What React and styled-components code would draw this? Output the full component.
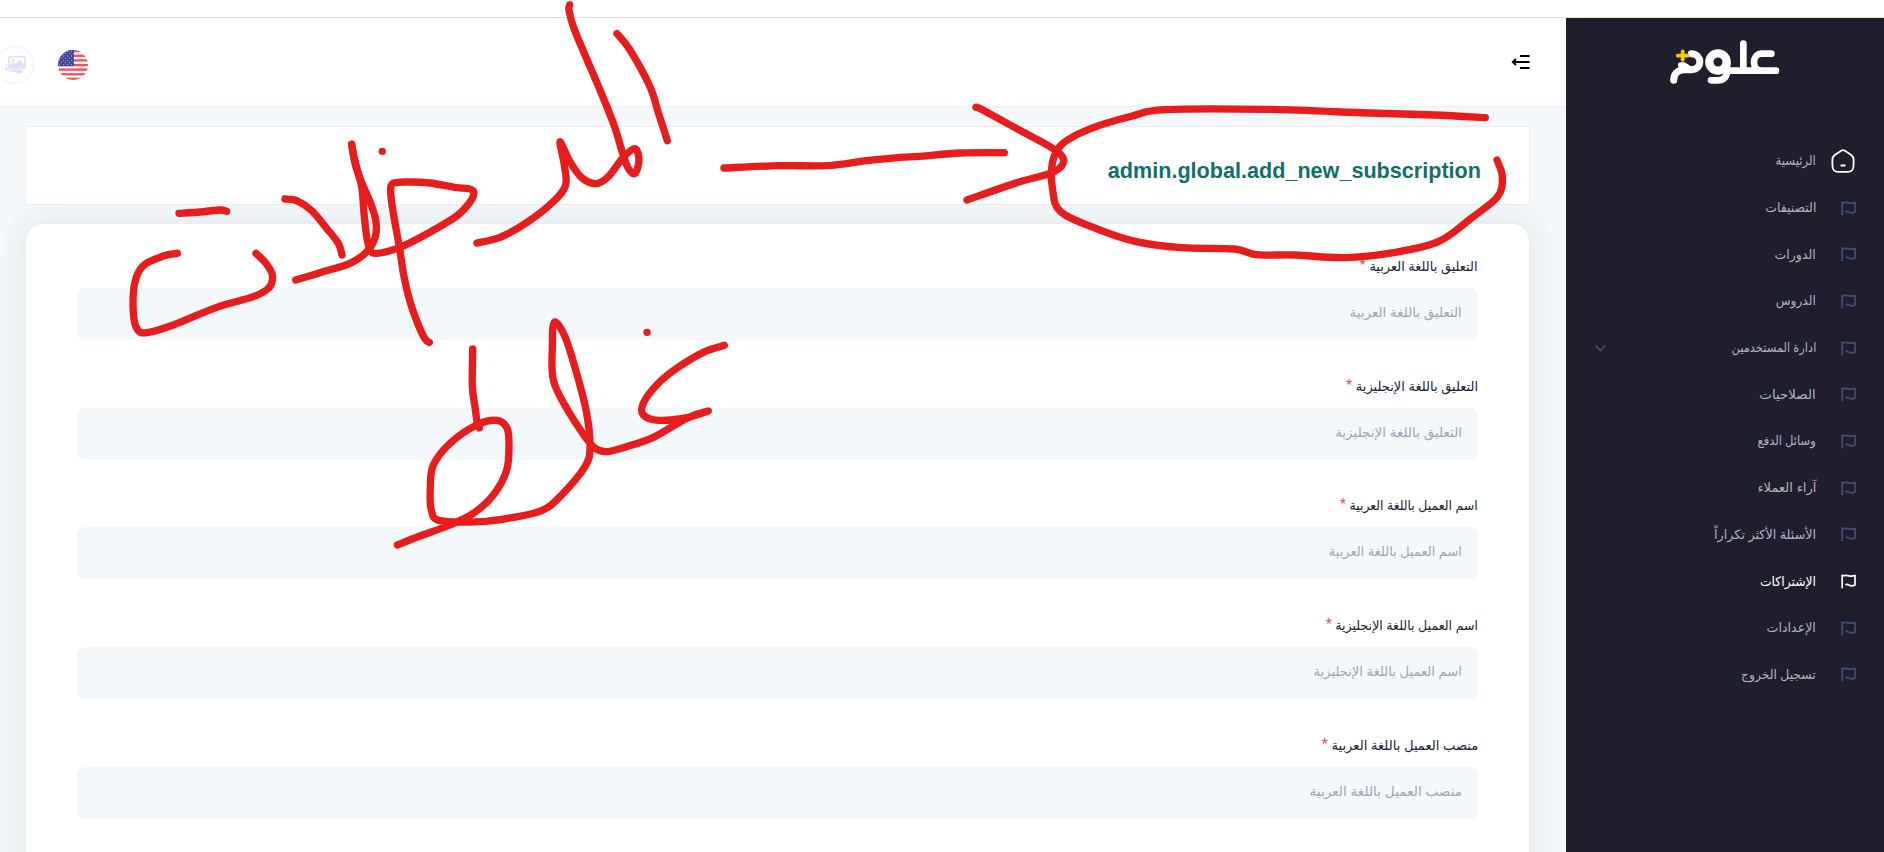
import React from 'react';
import styled, { createGlobalStyle } from 'styled-components';

const Global = createGlobalStyle`
  *, *::before, *::after { box-sizing: border-box; }
  body { margin: 0; background: #fff; overflow: hidden; font-family: "Liberation Sans", "DejaVu Sans", sans-serif; }
`;

const Page = styled.div`
  position: relative;
  width: 100%;
  height: 852px;
  padding-top: 17px;
  overflow: hidden;
`;

const Shell = styled.div`
  display: flex;
  height: 835px;
  border-top: 1px solid #dedede;
`;

const Sidebar = styled.aside`
  flex: 0 0 318px;
  background: #1e1e2d;
`;

const Brand = styled.div`
  display: flex;
  justify-content: center;
  padding: 14px 0 0 0;
  height: 120px;
`;

const Menu = styled.nav`
  display: flex;
  flex-direction: column;
`;

const MenuItem = styled.a`
  display: flex;
  align-items: center;
  height: 46.7px;
  padding: 0 28px 0 29px;
  color: ${p => (p.$active ? '#ffffff' : '#b0b0c4')};
`;

const MenuIcon = styled.span`
  display: flex;
  width: 40px;
  flex: none;
  justify-content: flex-start;
  padding-right: ${p => (p.$home ? '1px' : '0')};
  color: ${p => (p.$active ? '#ffffff' : '#494b74')};
`;

const MenuText = styled.span`
  flex: 1;
  font-size: 13px;
  line-height: 20px;
`;

const Fit = styled.span`
  display: inline-block;
  white-space: nowrap;
  transform: scaleX(${p => p.$x});
  transform-origin: right center;
`;

const Main = styled.main`
  flex: 1;
  min-width: 0;
  display: flex;
  flex-direction: column;
  background: #f4f8fb;
`;

const Header = styled.header`
  display: flex;
  flex: none;
  align-items: center;
  height: 89px;
  padding: 5px 36px 0 0;
  background: #fff;
  border-bottom: 1px solid #eceef0;
`;

const HeaderEnd = styled.div`
  display: flex;
  align-items: center;
  gap: 24px;
  margin-right: auto;
  margin-left: -4px;
`;

const Toggle = styled.span`
  display: flex;
  margin-top: -6px;
`;

const Avatar = styled.span`
  display: flex;
  align-items: center;
  justify-content: center;
  width: 38px;
  height: 38px;
  border: 1px solid #f0f1f3;
  border-radius: 50%;
`;

const Content = styled.div`
  display: flex;
  flex-direction: column;
  gap: 18px;
  padding: 19px 36px 0 25px;
`;

const TitleCard = styled.section`
  display: flex;
  align-items: center;
  height: 79px;
  padding: 10px 48px 0 0;
  background: #fff;
  border: 1px solid #ebedef;
`;

const Title = styled.h1`
  margin: 0;
  color: #11706c;
  font-size: 21.6px;
  line-height: 26px;
  font-weight: 700;
`;

const FormCard = styled.section`
  display: flex;
  flex-direction: column;
  height: 700px;
  padding: 30px 51px 0;
  background: #fff;
  border: 1px solid #eaecee;
  border-radius: 18px;
  box-shadow: 0 0 30px rgba(40, 50, 60, 0.09);
`;

const Field = styled.div`
  height: 119.65px;
  flex: none;
`;

const Label = styled.label`
  display: block;
  height: 34px;
  color: #181c32;
  font-size: 13px;
  line-height: 26px;
`;

const Required = styled.span`
  color: #f1416c;
  font-size: 16px;
  line-height: 20px;
`;

const InputBox = styled.div`
  display: flex;
  align-items: center;
  height: 52px;
  padding: 0 16px 4px;
  background: #f4f8fb;
  border-radius: 8px;
  color: #a1a5b7;
  font-size: 13.5px;
`;

const Ink = styled.svg`
  position: absolute;
  top: 0;
  left: 0;
  pointer-events: none;
`;

const menu = [
  { text: 'الرئيسية', fit: 0.9, home: true },
  { text: 'التصنيفات', fit: 0.96 },
  { text: 'الدورات', fit: 0.965 },
  { text: 'الدروس', fit: 0.935 },
  { text: 'ادارة المستخدمين', fit: 0.88, expandable: true },
  { text: 'الصلاحيات', fit: 1.03 },
  { text: 'وسائل الدفع', fit: 0.885 },
  { text: 'آراء العملاء', fit: 1.01 },
  { text: 'الأسئلة الأكثر تكراراً', fit: 0.98 },
  { text: 'الإشتراكات', fit: 0.95, active: true },
  { text: 'الإعدادات', fit: 0.97 },
  { text: 'تسجيل الخروج', fit: 0.95 },
];

const fields = [
  { text: 'التعليق باللغة العربية', fit: 0.995 },
  { text: 'التعليق باللغة الإنجليزية', fit: 1 },
  { text: 'اسم العميل باللغة العربية', fit: 0.958 },
  { text: 'اسم العميل باللغة الإنجليزية', fit: 0.97 },
  { text: 'منصب العميل باللغة العربية', fit: 1.01 },
];

/* Pen strokes, three units to a pixel. */
const strokes = [
  [[537,640],[600,636],[660,630],[680,634]],
  [[532,760],[490,768],[430,797],[404,850],[400,940],[412,988],[440,998],[520,975],[650,922],[760,890],[808,862],[817,825],[798,790],[768,760]],
  [[855,597],[890,602],[935,632],[980,685],[1015,730],[1026,765]],
  [[887,840],[960,818],[1050,790],[1100,755],[1126,710],[1127,660],[1110,605],[1080,535],[1063,475],[1055,433]],
  [[1055,433],[1065,490],[1085,560],[1092,640],[1100,710],[1110,748],[1130,760],[1200,742],[1280,702],[1370,648],[1413,602],[1421,575],[1405,566],[1365,562],[1290,549],[1225,546],[1180,550],[1172,575],[1180,640],[1198,740],[1212,830],[1230,905],[1255,975],[1276,1018],[1288,1027]],
  [[1431,729],[1500,712],[1580,668],[1660,605],[1697,555],[1692,490],[1680,425],[1710,485],[1745,533],[1788,551],[1825,530],[1870,472],[1905,446],[1917,480],[1905,520],[1885,505],[1868,460],[1842,375],[1800,270],[1755,165],[1720,80],[1707,30],[1709,15]],
  [[1851,101],[1890,150],[1950,260],[1975,338],[2002,422]],
  [[2172,504],[2340,497],[2480,497],[2600,482],[2700,472],[2760,469],[2882,459],[3013,458]],
  [[2928,322],[2944,328],[3054,388],[3158,445],[3191,482],[3158,517],[3054,547],[2901,600]],
  [[4456,353],[4303,345],[4107,339],[3801,328],[3495,329],[3397,348],[3274,385],[3189,430],[3158,485],[3158,570],[3182,635],[3287,685],[3409,725],[3544,743],[3703,747],[3770,764],[3887,765],[4033,773],[4180,758],[4315,725],[4413,655],[4493,590],[4507,530],[4491,480]],
  [[1418,1047],[1417,1160],[1425,1220],[1432,1270],[1438,1284]],
  [[1192,1635],[1260,1608],[1350,1575],[1420,1540],[1480,1485],[1520,1410],[1527,1330],[1520,1282],[1490,1261],[1430,1275],[1350,1330],[1300,1395],[1291,1460],[1294,1530],[1320,1562],[1440,1565],[1540,1552],[1625,1532],[1680,1490],[1755,1400],[1770,1340],[1760,1240],[1730,1120],[1695,1010],[1663,967],[1657,1040],[1660,1140],[1700,1225],[1755,1310],[1785,1345],[1820,1355],[1880,1340],[1960,1312],[2060,1255],[2125,1233],[2060,1253],[1975,1261],[1930,1245],[1930,1210],[1970,1155],[2030,1105],[2110,1057],[2173,1036]],
];
const dots = [[1147, 454], [1941, 997]];

function smooth(pts) {
  let d = `M${pts[0]}`;
  for (let i = 0; i < pts.length - 1; i++) {
    const a = pts[i - 1] || pts[i];
    const b = pts[i];
    const c = pts[i + 1];
    const e = pts[i + 2] || c;
    d += `C${b[0] + (c[0] - a[0]) / 6} ${b[1] + (c[1] - a[1]) / 6} ${c[0] - (e[0] - b[0]) / 6} ${c[1] - (e[1] - b[1]) / 6} ${c[0]} ${c[1]}`;
  }
  return d;
}

const Annotation = () => (
  <Ink width="1884" height="852" viewBox="0 0 5652 2556" fill="none" stroke="#e71c1c" strokeWidth="22" strokeLinecap="round" strokeLinejoin="round">
    {strokes.map((s, i) => <path key={i} d={smooth(s)} />)}
    {dots.map(([x, y]) => <circle key={x} cx={x} cy={y} r="11" fill="#e71c1c" stroke="none" />)}
  </Ink>
);

const Logo = () => (
  <svg width="130" height="60" viewBox="0 0 390 180" fill="none" stroke="#fff" strokeWidth="20" strokeLinecap="round" strokeLinejoin="round">
    <path d="M334 65H306C274 65 274 116 306 116M348 116H205M250 35V112" />
    <ellipse cx="174" cy="90" rx="26" ry="26" strokeWidth="25" />
    <path d="M201 92V116C201 136 190 145 172 145H153" />
    <path d="M94 65C128 66 128 113 95 113H72C50 114 41 128 41 145" strokeWidth="21" />
    <path d="M62 99H72L86 108" strokeWidth="16" />
    <path d="M53 71H83M68 58V84" stroke="#f9c900" strokeWidth="11" />
  </svg>
);

const Home = () => (
  <svg width="24" height="24" viewBox="0 0 24 24" fill="none" stroke="#fff" strokeWidth="1.8" strokeLinecap="round" strokeLinejoin="round">
    <path d="M10.6 1.5Q12 .7 13.4 1.5L20.3 6Q22.5 7.7 22.6 10.5V15.5C22.6 21 21 22.9 16.5 22.9H7.5C3 22.9 1.4 21 1.4 15.5V10.5Q1.5 7.7 3.7 6Z" />
    <path d="M10.4 16.6H13.8" strokeWidth="2" />
  </svg>
);

const Flag = () => (
  <svg width="15" height="15" viewBox="0 0 15 15" fill="none" stroke="currentColor" strokeWidth="1.7">
    <path d="M1.2 .5V14.3M1.2 2.2C4 1 6 1.3 8 1.9C10 2.4 12 2.1 14 1.7V11C12 12 9.5 12 7.8 11.1C6.7 10.4 5.5 10.3 4.3 10.7" />
  </svg>
);

const Chevron = () => (
  <svg width="11" height="7" viewBox="0 0 11 7" fill="none" stroke="#494b74" strokeWidth="1.7" strokeLinecap="round" strokeLinejoin="round">
    <path d="M1 1L5.5 5.6L10 1" />
  </svg>
);

const ToggleIcon = () => (
  <svg width="19" height="16" viewBox="0 0 19 16" fill="none" stroke="#000" strokeWidth="1.8">
    <path d="M9 2H18.6M2 8H18.6M9 14H18.6" />
    <path d="M5 5L2 8L5 11" strokeWidth="2.2" />
  </svg>
);

const UsFlag = () => (
  <svg width="30" height="30" viewBox="0 0 30 30">
    <clipPath id="round"><circle cx="15" cy="15" r="15" /></clipPath>
    <g clipPath="url(#round)">
      <rect width="30" height="30" fill="#fff" />
      {[0, 1, 2, 3, 4, 5, 6].map(i => <rect key={i} y={i * 4.62} width="30" height="2.31" fill="#ff4b55" />)}
      <rect width="16" height="16.2" fill="#41479b" />
      {[0, 1, 2, 3, 4, 5, 6].map(r => [0, 1, 2, 3].map(c => (
        <circle key={`${r}-${c}`} cx={1.6 + c * 4 + (r % 2) * 2} cy={1.6 + r * 2.15} r=".55" fill="#c5c8e8" />
      )))}
    </g>
  </svg>
);

const Pictures = () => (
  <svg width="21" height="20" viewBox="0 0 21 20">
    <path d="M2 6L.3 13.8Q.1 15 1.3 15.3L16 18.8L18 15H4.5Q2 15 2 12.5Z" fill="#dbe2f1" />
    <rect x="4" y="1.6" width="16" height="11.8" rx="1" fill="#fff" stroke="#dbe2f1" strokeWidth="1.7" />
    <circle cx="7.8" cy="5" r="1.5" fill="#dbe2f1" />
    <path d="M5.2 12.6V10L8.5 7L10.5 8.8L14.3 4.5L18.8 9.3V12.6Z" fill="#dbe2f1" />
  </svg>
);

export default function App() {
  return (
    <Page dir="rtl">
      <Global />
      <Shell>
        <Sidebar>
          <Brand><Logo /></Brand>
          <Menu>
            {menu.map(item => (
              <MenuItem key={item.text} $active={item.active}>
                <MenuIcon $active={item.active} $home={item.home}>{item.home ? <Home /> : <Flag />}</MenuIcon>
                <MenuText><Fit $x={item.fit}>{item.text}</Fit></MenuText>
                {item.expandable && <Chevron />}
              </MenuItem>
            ))}
          </Menu>
        </Sidebar>
        <Main>
          <Header>
            <Toggle><ToggleIcon /></Toggle>
            <HeaderEnd>
              <UsFlag />
              <Avatar><Pictures /></Avatar>
            </HeaderEnd>
          </Header>
          <Content>
            <TitleCard><Title dir="ltr">admin.global.add_new_subscription</Title></TitleCard>
            <FormCard>
              {fields.map(f => (
                <Field key={f.text}>
                  <Label><Fit $x={f.fit}>{f.text} <Required>*</Required></Fit></Label>
                  <InputBox><Fit $x={f.fit}>{f.text}</Fit></InputBox>
                </Field>
              ))}
            </FormCard>
          </Content>
        </Main>
      </Shell>
      <Annotation />
    </Page>
  );
}
